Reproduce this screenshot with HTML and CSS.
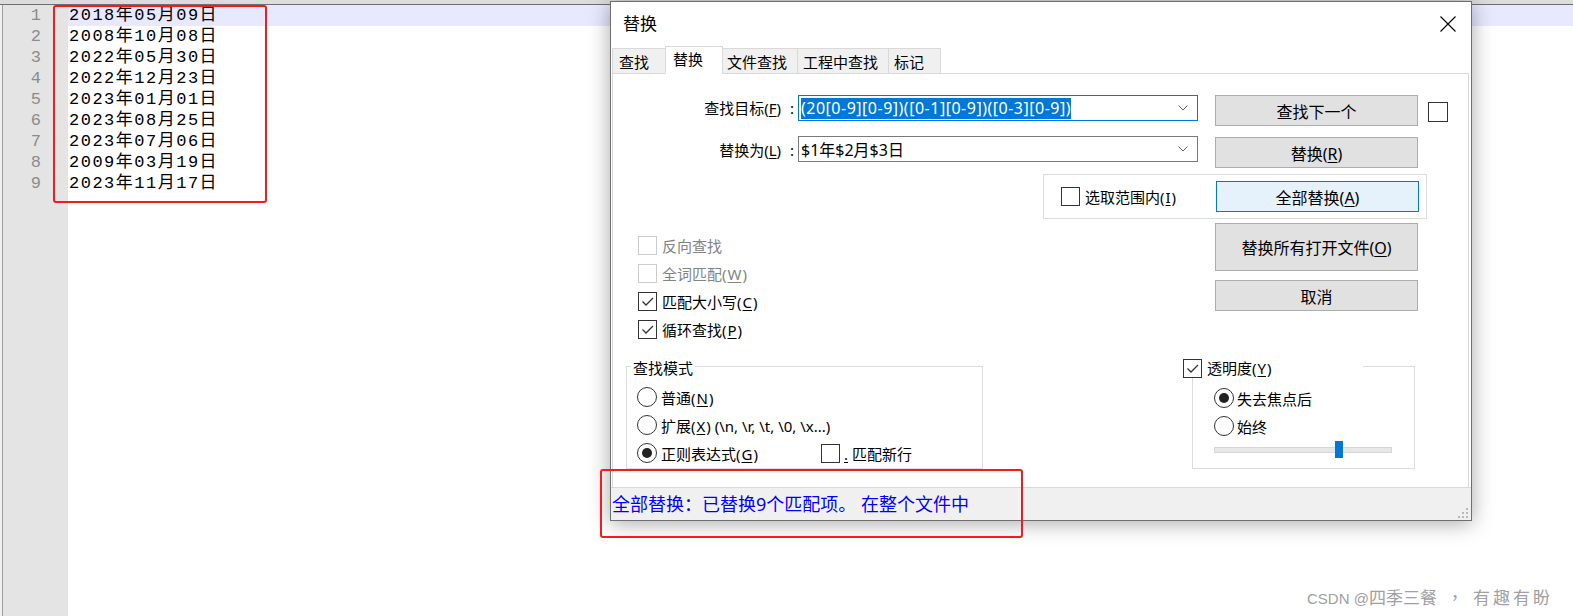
FILE: index.html
```html
<!DOCTYPE html>
<html lang="zh">
<head>
<meta charset="utf-8">
<title>替换</title>
<link rel="stylesheet" href="styles.css">
</head>
<body>
<div class="app">
  <div class="topstrip"></div>
  <div class="editor">
    <div class="gutter">
      <div class="ln">1</div><div class="ln">2</div><div class="ln">3</div>
      <div class="ln">4</div><div class="ln">5</div><div class="ln">6</div>
      <div class="ln">7</div><div class="ln">8</div><div class="ln">9</div>
    </div>
    <div class="lines">
      <div class="line current">2018年05月09日</div>
      <div class="line">2008年10月08日</div>
      <div class="line">2022年05月30日</div>
      <div class="line">2022年12月23日</div>
      <div class="line">2023年01月01日</div>
      <div class="line">2023年08月25日</div>
      <div class="line">2023年07月06日</div>
      <div class="line">2009年03月19日</div>
      <div class="line">2023年11月17日</div>
    </div>
  </div>

  <div class="dialog">
    <div class="titlebar">
      <span class="title">替换</span>
      <span class="close"><svg width="16" height="16" viewBox="0 0 16 16"><path d="M0.5 0.5L15.5 15.5M15.5 0.5L0.5 15.5" stroke="#000" stroke-width="1.1" fill="none"/></svg></span>
    </div>
    <div class="tabs">
      <div class="tab t1">查找</div>
      <div class="tab t2 active">替换</div>
      <div class="tab t3">文件查找</div>
      <div class="tab t4">工程中查找</div>
      <div class="tab t5">标记</div>
    </div>
    <div class="panel">
      <div class="band1">
        <div class="flabel r1">查找目标(<u>F</u>) :</div>
        <div class="combo focus r1"><span class="sel">(20[0-9][0-9])([0-1][0-9])([0-3][0-9])</span><svg class="chev" width="10" height="6" viewBox="0 0 10 6"><path d="M0.5 0.5L5 5L9.5 0.5" stroke="#606060" fill="none"/></svg></div>
        <div class="btn r1">查找下一个</div>
        <span class="cb side r1"></span>

        <div class="flabel r2">替换为(<u>L</u>) :</div>
        <div class="combo r2"><span>$1年$2月$3日</span><svg class="chev" width="10" height="6" viewBox="0 0 10 6"><path d="M0.5 0.5L5 5L9.5 0.5" stroke="#606060" fill="none"/></svg></div>
        <div class="btn r2"><span>替换(<u>R</u>)</span></div>

        <div class="scope r3">
          <label class="opt"><span class="cb"></span><span>选取范围内(<u>I</u>)</span></label>
          <div class="btn default"><span>全部替换(<u>A</u>)</span></div>
        </div>
      </div>

      <div class="band2">
        <div class="opts">
          <div class="opt disabled"><span class="cb"></span><span>反向查找</span></div>
          <div class="opt disabled"><span class="cb"></span><span>全词匹配(<u>W</u>)</span></div>
          <div class="opt"><span class="cb"><svg width="17" height="17" viewBox="0 0 17 17"><path d="M3.5 8.5L7 12L14 5" stroke="#333" stroke-width="1.3" fill="none"/></svg></span><span>匹配大小写(<u>C</u>)</span></div>
          <div class="opt"><span class="cb"><svg width="17" height="17" viewBox="0 0 17 17"><path d="M3.5 8.5L7 12L14 5" stroke="#333" stroke-width="1.3" fill="none"/></svg></span><span>循环查找(<u>P</u>)</span></div>
        </div>
        <div class="btncol">
          <div class="btn tall"><span>替换所有打开文件(<u>O</u>)</span></div>
          <div class="btn">取消</div>
        </div>
      </div>

      <div class="band3">
        <fieldset class="grp mode">
          <legend class="lg">查找模式</legend>
          <div class="mode-body">
            <div class="opt"><span class="rb"></span><span>普通(<u>N</u>)</span></div>
            <div class="opt"><span class="rb"></span><span>扩展(<u>X</u>) (\n, \r, \t, \0, \x...)</span></div>
            <div class="opt regex">
              <span class="regex-main"><span class="rb on"></span><span>正则表达式(<u>G</u>)</span></span>
              <span class="newline"><span class="cb"></span><span><u>.</u> 匹配新行</span></span>
            </div>
          </div>
        </fieldset>
        <fieldset class="grp trans">
          <legend class="lg lg-trans"><span class="lg-inner"><span class="cb"><svg width="17" height="17" viewBox="0 0 17 17"><path d="M3.5 8.5L7 12L14 5" stroke="#333" stroke-width="1.3" fill="none"/></svg></span><span>透明度(<u>Y</u>)</span></span></legend>
          <div class="trans-body">
            <div class="opt"><span class="rb on"></span><span>失去焦点后</span></div>
            <div class="opt"><span class="rb"></span><span>始终</span></div>
            <div class="slider"><div class="track"></div><div class="thumb"></div></div>
          </div>
        </fieldset>
      </div>
    </div>
    <div class="status">
      <span class="msg">全部替换：已替换9个匹配项。 在整个文件中</span>
      <svg class="grip" width="12" height="12" viewBox="0 0 12 12" fill="#b8b8b8">
        <rect x="9" y="1" width="2" height="2"/>
        <rect x="5" y="5" width="2" height="2"/><rect x="9" y="5" width="2" height="2"/>
        <rect x="1" y="9" width="2" height="2"/><rect x="5" y="9" width="2" height="2"/><rect x="9" y="9" width="2" height="2"/>
      </svg>
    </div>
  </div>

  <div class="annot annot-text"></div>
  <div class="annot annot-status"></div>
  <div class="watermark"><span class="wm-latin">CSDN @</span>四季三餐<span class="wm-comma">，</span><span class="wm-tail">有趣有盼</span></div>
</div>
</body>
</html>
```

FILE: styles.css
```css
* { box-sizing: border-box; }
html, body { margin: 0; padding: 0; }
body {
  width: 1573px;
  height: 616px;
  overflow: hidden;
  background: #fff;
  font-family: "Noto Sans", "Noto Sans CJK SC", sans-serif;
  color: #000;
}
u { text-decoration: underline; text-underline-offset: 2px; }

.app { position: relative; width: 1573px; height: 616px; overflow: hidden; }

/* ---------- editor ---------- */
.topstrip { height: 5px; background: #dcdcdc; border-bottom: 1px solid #6e6e6e; }
.editor { display: flex; height: 611px; background: #f0f0f0; padding-left: 2px; }
.gutter {
  width: 66px;
  background: #e4e4e4;
  border-left: 1px solid #a0a0a0;
  padding-right: 27px;
  font-family: "Liberation Mono", monospace;
  font-size: 17px;
  color: #8c8c8c;
  text-align: right;
}
.ln { height: 21px; line-height: 21px; }
.lines {
  flex: 1;
  background: #fff;
  font-family: "Liberation Mono", "Noto Sans CJK SC", monospace;
  font-size: 17px;
  letter-spacing: 1.5px;
}
.line { height: 21px; line-height: 21px; padding-left: 1px; white-space: pre; }
.line.current { background: #e8e8ff; }

/* ---------- annotations ---------- */
.annot { position: absolute; border: 2px solid #f21c1c; border-radius: 3px; }
.annot-text { left: 53px; top: 5px; width: 214px; height: 198px; }
.annot-status { left: 600px; top: 469px; width: 423px; height: 69px; }

.watermark {
  position: absolute;
  left: 1307px;
  top: 584px;
  font-family: "Liberation Sans", "Noto Sans CJK SC", sans-serif;
  font-size: 17px;
  line-height: 26px;
  color: #a0a0a0;
  text-shadow: 0 0 1px #fff;
  white-space: nowrap;
}
.wm-latin { font-size: 15px; }
.wm-comma {
  display: inline-block;
  width: 36px;
  text-align: center;
  font-family: "Noto Sans CJK TC", sans-serif;
}
.wm-tail { letter-spacing: 3px; }

/* ---------- dialog ---------- */
.dialog {
  position: absolute;
  left: 610px;
  top: 1px;
  width: 862px;
  height: 520px;
  background: #fff;
  border: 1px solid #6f6f6f;
  box-shadow: 0 2px 20px rgba(0, 0, 0, 0.35);
  display: flex;
  flex-direction: column;
}
.titlebar {
  height: 44px;
  display: flex;
  align-items: center;
  justify-content: space-between;
  padding-left: 12px;
}
.title { font-size: 17px; line-height: 24px; }
.close { width: 46px; height: 44px; display: flex; align-items: center; justify-content: center; }

.tabs { height: 27px; display: flex; align-items: flex-end; padding-left: 1px; }
.tab {
  height: 25px;
  border: 1px solid #d9d9d9;
  border-bottom: none;
  background: #f0f0f0;
  font-size: 15px;
  line-height: 20px;
  padding: 3px 0 0 6px;
  margin-right: -1px;
  white-space: nowrap;
}
.tab.active {
  height: 28px;
  background: #fff;
  margin-bottom: -1px;
  padding-top: 2px;
  padding-left: 7px;
  position: relative;
  z-index: 1;
}
.t1 { width: 54px; }
.t2 { width: 58px; }
.t3 { width: 76px; padding-left: 4px; }
.t4 { width: 92px; padding-left: 5px; }
.t5 { width: 53px; padding-left: 5px; }

.panel {
  height: 414px;
  margin: 0 2px 0 1px;
  border: 1px solid #d9d9d9;
  border-bottom: none;
  padding-top: 21px;
}

/* band 1: comboboxes + main buttons */
.band1 {
  display: grid;
  grid-template-columns: 181px 4px 400px 17px 203px 10px 20px;
  grid-template-rows: 42px 37px 45px;
  align-items: start;
}
.r1 { grid-row: 1; }
.r2 { grid-row: 2; }
.r3 { grid-row: 3; }
.flabel {
  grid-column: 1;
  font-size: 15px;
  height: 26px;
  line-height: 26px;
  text-align: right;
  white-space: nowrap;
  word-spacing: 5px;
}
.combo {
  grid-column: 3;
  height: 26px;
  border: 1px solid #7a7a7a;
  display: flex;
  align-items: center;
  justify-content: space-between;
  padding: 0 9px 0 2px;
  font-size: 16px;
  white-space: nowrap;
}
.combo.focus { border-color: #0078d7; }
.combo .sel { background: #0078d7; color: #fff; line-height: 21px; letter-spacing: 0.5px; }
.r2.combo { margin-top: -1px; }
.btn {
  grid-column: 5;
  height: 31px;
  background: #e1e1e1;
  border: 1px solid #adadad;
  font-size: 16px;
  display: flex;
  align-items: center;
  justify-content: center;
  white-space: nowrap;
}
.btn.default { background: #e5f1fb; border-color: #0078d7; width: 203px; }
.btn.tall { height: 48px; }
.cb.side { grid-column: 7; margin-top: 7px; width: 20px; height: 20px; }

.scope {
  grid-column: 3 / 8;
  justify-self: start;
  margin-left: 245px;
  width: 384px;
  height: 45px;
  border: 1px solid #dcdcdc;
  display: flex;
  align-items: center;
  justify-content: space-between;
  padding: 0 7px 0 17px;
}

/* generic option rows */
.opt {
  height: 28px;
  display: flex;
  align-items: center;
  gap: 5px;
  font-size: 15px;
  white-space: nowrap;
}
.opt u { padding: 0 1px; }
.opt.disabled { color: #838383; }
.cb {
  width: 19px;
  height: 19px;
  border: 1px solid #333;
  background: #fff;
  display: inline-flex;
  align-items: center;
  justify-content: center;
  flex: none;
}
.opt.disabled .cb { border-color: #cccccc; }
.rb {
  width: 20px;
  height: 20px;
  border: 1px solid #333;
  border-radius: 50%;
  display: inline-flex;
  align-items: center;
  justify-content: center;
  flex: none;
  margin-right: -1px;
}
.rb.on::after {
  content: "";
  width: 10px;
  height: 10px;
  border-radius: 50%;
  background: #222;
}

/* band 2 */
.band2 {
  display: grid;
  grid-template-columns: 602px 203px;
  height: 135px;
}
.opts { padding: 12px 0 0 25px; }
.btncol { padding-top: 4px; display: flex; flex-direction: column; gap: 9px; }

/* band 3 */
.band3 { display: flex; align-items: flex-start; }
.grp {
  margin: 0;
  padding: 0;
  border: 1px solid #dcdcdc;
  min-width: 0;
}
.lg {
  font-size: 15px;
  height: 24px;
  line-height: 20px;
  padding: 4px 2px 0 2px;
  margin-left: 4px;
}
.lg u { padding: 0 1px; }
.mode { margin-left: 13px; width: 357px; padding-bottom: 1px; }
.mode-body { padding: 5px 0 0 10px; }
.regex { gap: 0; }
.regex-main { display: inline-flex; align-items: center; gap: 5px; width: 184px; }
.newline { display: inline-flex; align-items: center; gap: 4px; }
.newline u { padding: 0; }

.trans { margin-left: 209px; width: 223px; }
.lg-trans { margin-left: -10px; width: 180px; padding: 4px 0 0 0; background: #fff; }
.lg-inner { display: inline-flex; align-items: center; gap: 5px; height: 20px; }
.trans-body { padding: 6px 0 10px 21px; }
.trans-body .opt { gap: 4px; }
.slider { position: relative; width: 178px; height: 17px; margin-top: 1px; }
.track {
  position: absolute;
  left: 0; right: 0; top: 6px;
  height: 6px;
  background: #e7e7e7;
  border: 1px solid #d6d6d6;
}
.thumb { position: absolute; left: 121px; top: 0; width: 8px; height: 17px; background: #0078d7; }

/* status bar */
.status {
  height: 33px;
  border-top: 1px solid #d9d9d9;
  background: #f0f0f0;
  display: flex;
  justify-content: space-between;
  align-items: flex-end;
  padding-left: 1px;
}
.msg { font-size: 18px; line-height: 30px; color: #0000ff; align-self: center; white-space: nowrap; }
.grip { margin: 0 2px 1px 0; }
```
